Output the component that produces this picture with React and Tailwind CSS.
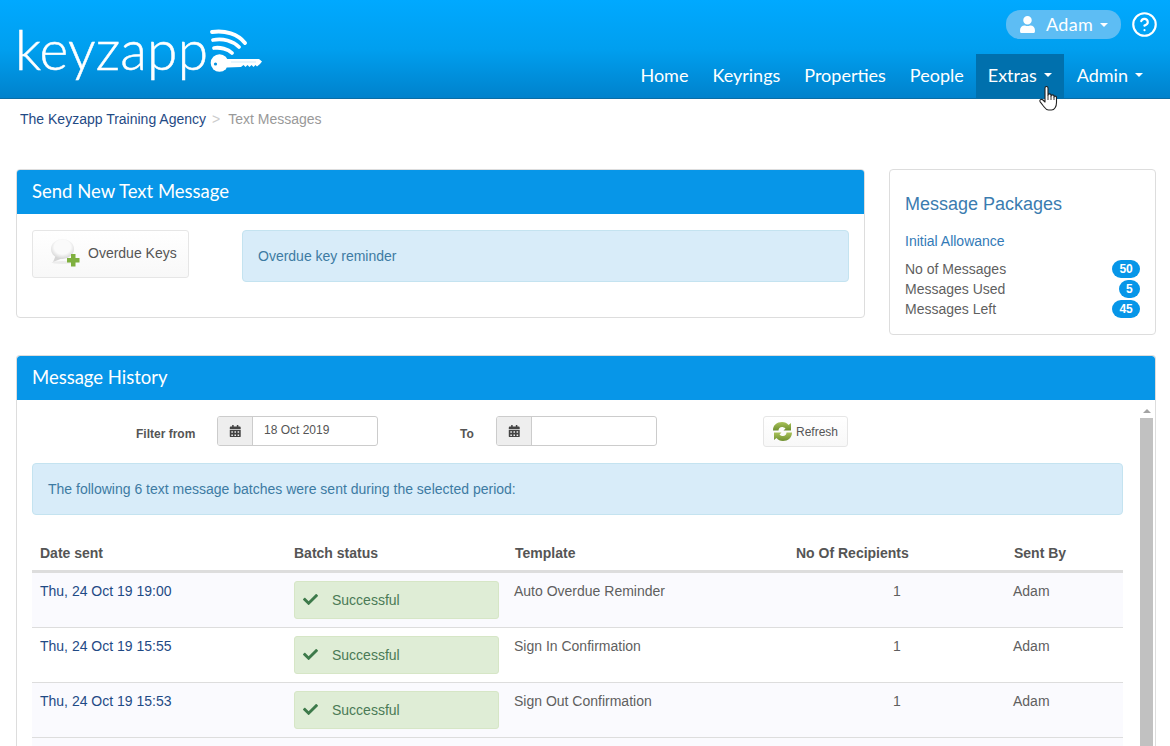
import { CircleHelp } from "lucide-react";
import { FaCalendarAlt, FaCheck, FaUser } from "react-icons/fa";

const rows = [
  { date: "Thu, 24 Oct 19 19:00", template: "Auto Overdue Reminder", first: true },
  { date: "Thu, 24 Oct 19 15:55", template: "Sign In Confirmation" },
  { date: "Thu, 24 Oct 19 15:53", template: "Sign Out Confirmation" },
];

const navFont = "font-['Lato','Open_Sans',sans-serif]";

function Caret() {
  return <span className="ml-[7px] inline-block h-0 w-0 border-x-[4px] border-t-[4px] border-x-transparent border-t-white align-middle" />;
}

function KeyMark() {
  return (
    <svg width="54" height="48" viewBox="0 0 54 48" className="absolute top-[29px] left-[210px]">
      <g fill="none" stroke="#fff" strokeWidth="3.800" strokeLinecap="round">
        <path d="M2 3C15 1 28 5 35 14" />
        <path d="M3 11C13 9 23 12 29 18" />
        <path d="M4 19C10 18 18 20 22 24" />
      </g>
      <circle cx="9.500" cy="34" r="8.800" fill="#fff" />
      <circle cx="5.500" cy="35" r="1.600" fill="#0a93e0" />
      <path d="M16 30H49L52 32.500L50 35L47 37.500L45.500 36L43.500 38L41.500 36L39.500 38L37.500 36L35.500 38L33.500 36L31 38L17 38.500Z" fill="#fff" />
      <path d="M21 33H46" stroke="#b5def5" strokeWidth="0.600" />
    </svg>
  );
}

function Header() {
  return (
    <header className="flex h-[99px] shrink-0 justify-between border-b border-[#0a6da5] bg-gradient-to-b from-[#00a9ff] via-[#009fef] to-[#0082cc] pr-[14px] pl-[15px]">
      <div className="flex h-[78px] items-end">
        <span className="font-['Lato',sans-serif] text-[55px] leading-[58px] font-light tracking-[0.2px] text-white [-webkit-text-stroke:0.5px_white]">keyzapp</span>
      </div>
      <KeyMark />
      <div className="flex flex-col items-end">
        <div className="mt-[10px] flex items-center">
          <button type="button" className={`flex h-[29px] w-[115px] items-center justify-center rounded-[14px] bg-[#5dbdf4] text-[18px] tracking-[0.3px] text-white ${navFont}`}>
            <FaUser className="mr-[10px] text-[17px]" />
            Adam
            <Caret />
          </button>
          <CircleHelp size={27} strokeWidth={1.9} className="mt-[-1px] mr-[-2px] ml-[10px] text-white" />
        </div>
        <nav className={`mt-[15px] mr-[1px] flex h-[44px] text-[18px] text-white ${navFont}`}>
          <a className="flex items-center px-3 pb-[2px]">Home</a>
          <a className="flex items-center px-3 pb-[2px]">Keyrings</a>
          <a className="flex items-center px-3 pb-[2px]">Properties</a>
          <a className="flex items-center px-3 pb-[2px]">People</a>
          <a className="flex w-[88px] items-center bg-[#0070ad] px-3 pb-[2px]">Extras<Caret /></a>
          <a className="flex items-center pr-3 pb-[2px] pl-[13px]">Admin<Caret /></a>
        </nav>
      </div>
    </header>
  );
}

function PanelHeading({ children }) {
  return (
    <div className={`flex h-[44px] items-center rounded-t-[3px] bg-[#0796e8] px-[15px] text-[18.500px] text-white ${navFont}`}>
      {children}
    </div>
  );
}

function BubbleIcon() {
  return (
    <svg width="32" height="31" viewBox="0 0 32 31" className="mt-[5px] mr-[6px]">
      <defs>
        <radialGradient id="bubbleFill" cx="0.500" cy="0.400" r="0.650">
          <stop offset="0.550" stopColor="#fafafa" />
          <stop offset="1" stopColor="#cdcdcd" />
        </radialGradient>
      </defs>
      <ellipse cx="12.500" cy="26.500" rx="11" ry="1.500" fill="#ececec" />
      <path d="M6 19L3 26L13 22Z" fill="#d6d6d6" />
      <ellipse cx="12.500" cy="13" rx="11.500" ry="10" fill="url(#bubbleFill)" />
      <path d="M21 18h4.500v4h4v4.500h-4v4H21v-4h-4v-4.500h4Z" fill="#7fb03f" />
    </svg>
  );
}

function RefreshIcon() {
  return (
    <svg width="20" height="19" viewBox="0 0 20 19" className="mr-[3px]">
      <defs>
        <linearGradient id="refreshFill" x1="0" y1="0" x2="0" y2="1">
          <stop offset="0" stopColor="#a9c25a" />
          <stop offset="1" stopColor="#6f9030" />
        </linearGradient>
      </defs>
      <path d="M0 8C0 3 4 0 9 0C12 0 14 1 15.500 3L18 1V8.500H10.500L12.500 6.500C11.500 5.500 10 5 9 5C7 5 5.500 6.500 5.500 8.500H0Z" fill="url(#refreshFill)" />
      <path d="M19 10.500C19 15.500 15 19 10 19C7 19 5 18 3.500 16L1 18V10.500H8.500L6.500 12.500C7.500 13.500 9 14 10 14C12 14 13.500 12.500 13.500 10.500H19Z" fill="url(#refreshFill)" />
    </svg>
  );
}

function DateInput({ value }) {
  return (
    <div className="flex h-[30px] w-[161px] overflow-hidden rounded-[3px] border border-[#ccc]">
      <span className="flex w-[35px] items-center justify-center border-r border-[#ccc] bg-[#eee] text-[12.500px] text-[#444]">
        <FaCalendarAlt />
      </span>
      <span className="flex-1 pt-[5px] pl-[11px] text-[12px] leading-[17px] text-[#555]">{value}</span>
    </div>
  );
}

function Scrollbar() {
  return (
    <div className="flex w-[13px] shrink-0 flex-col items-center">
      <span className="mt-[9px] mb-[5px] h-0 w-0 border-x-[4px] border-b-[4px] border-x-transparent border-b-[#a3a3a3]" />
      <div className="w-full flex-1 bg-[#c1c1c1]" />
    </div>
  );
}

function HistoryTable() {
  return (
    <table className="mt-[19px] w-[1091px] table-fixed border-collapse text-[14px]">
      <colgroup>
        <col className="w-[254px]" />
        <col className="w-[221px]" />
        <col className="w-[281px]" />
        <col className="w-[218px]" />
        <col />
      </colgroup>
      <thead>
        <tr className="h-[37px] border-b-[3px] border-[#ddd] text-left font-bold text-[#555]">
          <th className="px-2 pt-[3px] align-middle">Date sent</th>
          <th className="px-2 pt-[3px] align-middle">Batch status</th>
          <th className="px-2 pt-[3px] align-middle">Template</th>
          <th className="px-2 pt-[3px] align-middle">No Of Recipients</th>
          <th className="px-2 pt-[3px] align-middle">Sent By</th>
        </tr>
      </thead>
      <tbody>
        {rows.map((row, i) => (
          <tr key={row.date} className={`border-b border-[#ddd] ${row.first ? "h-[56px]" : "h-[55px]"} ${i % 2 === 0 ? "bg-[#fafafe]" : "bg-white"}`}>
            <td className="px-2 pt-[8px] align-top leading-[20px] text-[#1f4a85]">{row.date}</td>
            <td className="px-2 pt-[8px] align-top">
              <div className="flex h-[38px] w-[205px] items-center rounded-[3px] border border-[#d6e6c6] bg-[#dfedd6] pl-[8px] text-[#4a7a55]">
                <FaCheck className="mr-[14px] text-[15px] text-[#3d7a4a]" />
                <span className="pt-[1px] text-[14px]">Successful</span>
              </div>
            </td>
            <td className="pt-[8px] pr-2 pl-[7px] align-top leading-[20px] text-[#5f5f5f]">{row.template}</td>
            <td className="px-2 pt-[8px] text-center align-top leading-[20px] text-[#5f5f5f]">1</td>
            <td className="pt-[8px] pr-2 pl-[7px] align-top leading-[20px] text-[#5f5f5f]">Adam</td>
          </tr>
        ))}
        <tr className="h-[30px] bg-[#fafafe]">
          <td colSpan={5} />
        </tr>
      </tbody>
    </table>
  );
}

function CountRow({ label, count }) {
  return (
    <div className="flex h-[20px] items-center justify-between text-[14px] text-[#5f5f5f]">
      <span>{label}</span>
      <span className="flex h-[18px] min-w-[21px] items-center justify-center rounded-[9px] bg-[#0796e8] px-[7.250px] text-[12px] font-bold text-white">{count}</span>
    </div>
  );
}

function HandCursor() {
  return (
    <svg width="19" height="25" viewBox="0 0 19 25" className="absolute top-[86px] left-[1039px]">
      <path
        d="M6 2C6 0 9 0 9 2V9C9 7.500 12 7.500 12 9V10C12 8.500 15 8.500 15 10V11C15 9.800 17.500 9.800 17.500 11.500V16.500C17.500 20.500 15.500 24 12.500 24H9.500C7 24 6 22 4 19.500L1.200 15.800C0 14 2.300 12.500 4 14L6 16Z"
        fill="#fff"
        stroke="#222"
        strokeWidth="1.100"
        strokeLinejoin="round"
      />
      <path d="M9 9V14M12 10V14M15 11V14" stroke="#222" strokeWidth="0.900" fill="none" />
    </svg>
  );
}

export default function App() {
  return (
    <div className="relative flex h-[746px] w-full flex-col overflow-hidden bg-white font-['Liberation_Sans',Arial,sans-serif]">
      <Header />
      <main className="flex min-h-0 flex-1 flex-col pr-[14px] pl-4">
        <div className="flex h-[40px] shrink-0 items-center pl-1 text-[14px]">
          <span className="text-[#1f4a85]">The Keyzapp Training Agency</span>
          <span className="mx-[6px] text-[#ccc]">&gt;</span>
          <span className="ml-[2px] text-[#999]">Text Messages</span>
        </div>

        <div className="mt-[30px] flex shrink-0 items-start gap-6">
          <section className="h-[149px] w-[849px] rounded border border-[#ddd]">
            <PanelHeading>Send New Text Message</PanelHeading>
            <div className="flex items-start px-[15px] pt-[16px]">
              <button type="button" className="flex h-[48px] w-[157px] items-start rounded-[3px] border border-[#e6e6e6] bg-gradient-to-b from-white to-[#f8f8f8] pl-[17px] text-[14px] leading-[44px] text-[#555]">
                <BubbleIcon />
                Overdue Keys
              </button>
              <div className="ml-[53px] h-[52px] w-[607px] rounded border border-[#c4e3f0] bg-[#d8ecf9] px-[15px] pt-[15px] text-[14px] leading-[20px] text-[#3d7ba3]">
                Overdue key reminder
              </div>
            </div>
          </section>

          <aside className="h-[166px] w-[267px] rounded border border-[#ddd] px-[15px] pt-[22px]">
            <h2 className="text-[18px] leading-[24px] text-[#3b7cb0]">Message Packages</h2>
            <p className="mt-[15px] text-[14px] leading-[20px] text-[#337ab7]">Initial Allowance</p>
            <div className="mt-[8px]">
              <CountRow label="No of Messages" count="50" />
              <CountRow label="Messages Used" count="5" />
              <CountRow label="Messages Left" count="45" />
            </div>
          </aside>
        </div>

        <section className="mt-[20px] min-h-0 flex-1 overflow-hidden rounded-t border border-b-0 border-[#ddd]">
          <PanelHeading>Message History</PanelHeading>
          <div className="flex h-full">
            <div className="min-w-0 flex-1 pt-[16px] pl-[15px]">
              <div className="flex h-[32px] items-start">
                <span className="mt-[10px] ml-[104px] w-[81px] text-[12px] leading-[17px] font-bold text-[#555]">Filter from</span>
                <DateInput value="18 Oct 2019" />
                <span className="mt-[10px] ml-[82px] w-[36px] text-[12px] leading-[17px] font-bold text-[#555]">To</span>
                <DateInput value="" />
                <button type="button" className="ml-[106px] flex h-[31px] w-[85px] items-center rounded-[3px] border border-[#e6e6e6] bg-gradient-to-b from-white to-[#f8f8f8] pl-[9px] text-[12px] text-[#555]">
                  <RefreshIcon />
                  Refresh
                </button>
              </div>
              <div className="mt-[15px] h-[52px] w-[1091px] rounded border border-[#c4e3f0] bg-[#d8ecf9] pt-[15px] pl-[15px] text-[14px] leading-[20px] text-[#3d7ba3]">
                The following 6 text message batches were sent during the selected period:
              </div>
              <HistoryTable />
            </div>
            <Scrollbar />
            <div className="w-[2px] shrink-0" />
          </div>
        </section>
      </main>
      <HandCursor />
    </div>
  );
}
